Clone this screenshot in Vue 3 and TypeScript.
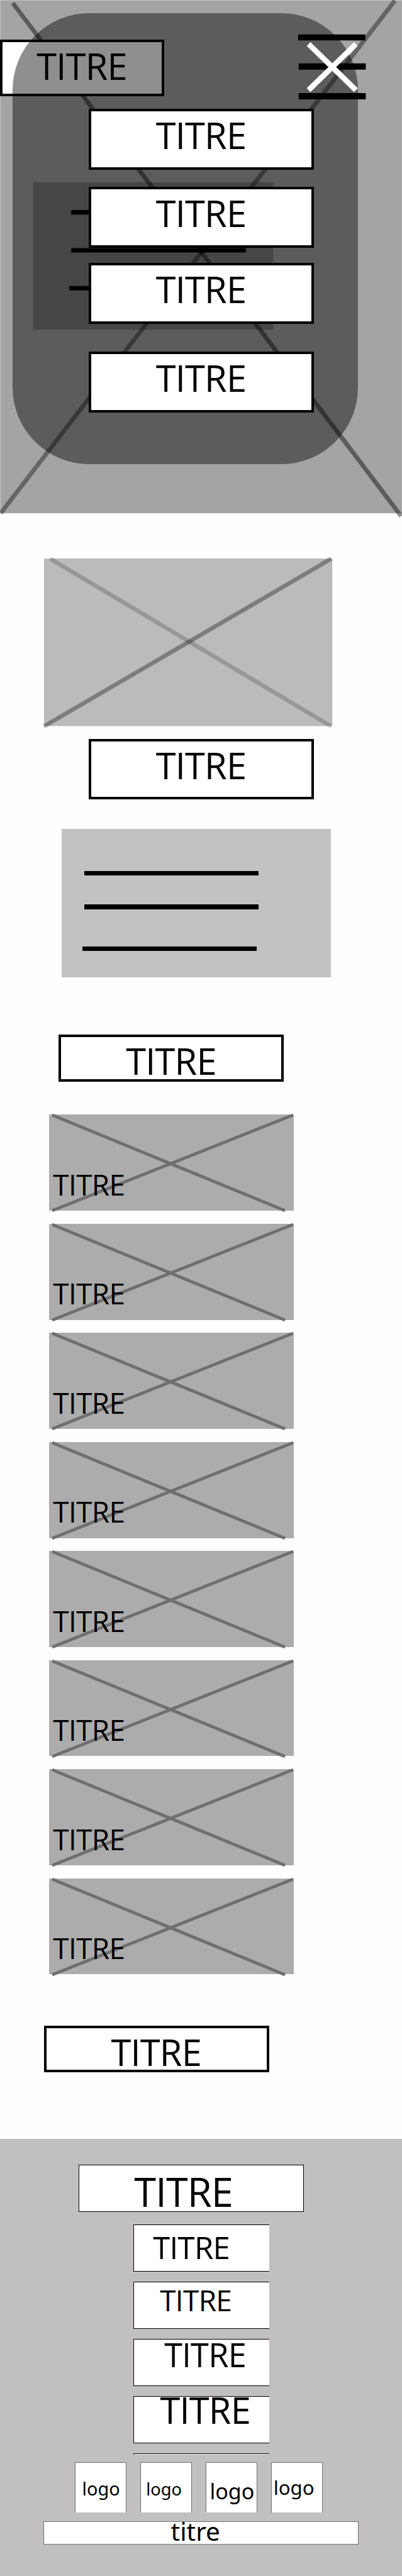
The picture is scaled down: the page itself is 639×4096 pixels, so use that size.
<script setup lang="ts">
const menu: string[] = ['first', 'second', 'third', 'fourth']
const gallery: number[] = [1, 2, 3, 4, 5, 6, 7, 8]
const links: string[] = ['link-a', 'link-b', 'link-c', 'link-d']
const logos: string[] = ['logo-a', 'logo-b', 'logo-c', 'logo-d']
</script>

<template>
  <div class="page">
    <header class="hero">
      <svg class="layer" viewBox="0 0 807 1040">
        <rect x="0" y="0" width="807" height="1030.5" fill="#d0d0d0" />
        <rect x="1" y="1" width="805.2" height="1029" fill="#a4a4a4" />
        <line x1="25.5" y1="6" x2="805" y2="1036" stroke="#000" stroke-opacity=".44" stroke-width="8.8" />
        <line x1="792.5" y1="1" x2="1.5" y2="1030" stroke="#000" stroke-opacity=".38" stroke-width="8.8" />
        <rect x="66.4" y="365.7" width="481.8" height="296.2" fill="#000" fill-opacity=".226" />
        <path d="M143 421.8h346v9H143zM143 498h350.6v9H143zM139 574h346v9H139z" fill="#000" />
        <path d="M598.3 69H733v12H598.3zM599.3 127.3H734v12.4H599.3zM599.3 187H734v12.4H599.3z" fill="#000" />
      </svg>
      <div class="box brand"><span class="label">TITRE</span></div>
      <div class="drawer"></div>
      <svg class="layer" viewBox="0 0 807 1040">
        <path d="M619.2 88.4L714.3 181M714.3 88.4L619.2 181" stroke="#fff" stroke-width="10.9" fill="none" />
      </svg>
      <nav class="menu">
        <div v-for="m in menu" :key="m" class="box card" :class="m"><span class="label">TITRE</span></div>
      </nav>
    </header>

    <svg class="picture" viewBox="0 0 578.5 336.5">
      <rect width="578.5" height="336.5" fill="#bbb" />
      <line x1="12.4" y1=".5" x2="576.4" y2="337" stroke="#000" stroke-opacity=".19" stroke-width="8.5" />
      <line x1="0" y1="337" x2="576.4" y2=".5" stroke="#000" stroke-opacity=".33" stroke-width="8.5" />
    </svg>
    <div class="box card caption"><span class="label">TITRE</span></div>

    <div class="text-panel">
      <i class="rule"></i>
      <i class="rule"></i>
      <i class="rule shifted"></i>
    </div>

    <div class="box heading works"><span class="label">TITRE</span></div>

    <section class="gallery">
      <article v-for="g in gallery" :key="g" class="tile">
        <svg class="cross" viewBox="0 0 490.5 193">
          <path d="M6.2 1.2L473.5 193.2M6.2 193.2L489.5 1.2" stroke="#6f6f6f" stroke-width="6.2" fill="none" />
        </svg>
        <span class="label tile-label">TITRE</span>
      </article>
    </section>

    <div class="box heading contact"><span class="label">TITRE</span></div>

    <footer class="footer">
      <div class="foot-title"><span class="label">TITRE</span></div>
      <div v-for="l in links" :key="l" class="link" :class="l"><span class="label">TITRE</span></div>
      <div class="link sliver"></div>
      <div class="logos">
        <div v-for="l in logos" :key="l" class="logo" :class="l"><span class="word">logo</span></div>
      </div>
      <div class="legal"><span class="word">titre</span></div>
    </footer>
  </div>
</template>

<style>
body {
  margin: 0;
  background: #fefefe;
  overflow: hidden;
}
</style>

<style scoped>
.page {
  zoom: 0.7921;
  width: 807px;
  height: 5172px;
  overflow: hidden;
  background: #fefefe;
  color: #000;
}
.page div,
.page header,
.page footer,
.page article {
  box-sizing: border-box;
}
.label,
.word {
  display: block;
  line-height: 1;
  white-space: nowrap;
}
.label {
  font-family: 'Open Sans', sans-serif;
  font-size: 73px;
  letter-spacing: -0.014em;
}
.word {
  font-family: 'Noto Sans', sans-serif;
}
.box {
  width: 452px;
  border: 5.1px solid #000;
  background: #fff;
  padding: 11.4px 0 0 129.7px;
}
.hero {
  position: relative;
  height: 1121px;
}
.layer {
  position: absolute;
  left: 0;
  top: 0;
  width: 807px;
  height: 1040px;
}
.brand {
  position: absolute;
  left: 0;
  top: 80px;
  width: 330px;
  height: 113px;
  padding: 11.4px 0 0 68.6px;
}
.drawer {
  position: absolute;
  left: 25.8px;
  top: 26.2px;
  width: 692.7px;
  height: 905px;
  border-radius: 154px;
  background: rgba(0, 0, 0, 0.44);
}
.menu {
  position: relative;
  padding: 219px 0 0 178px;
}
.card {
  height: 122px;
}
.second {
  margin-top: 34px;
}
.third {
  margin-top: 31px;
}
.fourth {
  margin-top: 56px;
}
.picture {
  display: block;
  width: 578.5px;
  height: 336.5px;
  margin-left: 88px;
  overflow: visible;
}
.caption {
  margin: 25.5px 0 0 178px;
}
.text-panel {
  width: 540px;
  height: 298px;
  margin: 59px 0 0 124px;
  padding: 84.2px 0 0 44.8px;
  background: #c2c2c2;
}
.rule {
  display: block;
  width: 350px;
  height: 9.3px;
  margin-bottom: 58.5px;
  background: #000;
}
.shifted {
  margin: 74.9px 0 0 -3.6px;
}
.rule:nth-child(2) {
  margin-bottom: 0;
}
.heading {
  height: 94px;
}
.works {
  margin: 115px 0 0 118px;
}
.gallery {
  display: flex;
  flex-direction: column;
  gap: 26px;
  margin: 66.5px 0 0 98.8px;
}
.tile {
  position: relative;
  width: 490.5px;
  height: 193px;
  background: #acacac;
}
.cross {
  position: absolute;
  left: 0;
  top: 0;
  width: 490.5px;
  height: 193px;
  overflow: visible;
}
.tile-label {
  position: relative;
  padding: 111.8px 0 0 7.7px;
  font-size: 58px;
}
.contact {
  margin: 102.5px 0 0 88px;
}
.footer {
  height: 880px;
  margin-top: 134px;
  padding-top: 52px;
  background: #c1bfc0;
}
.foot-title {
  width: 452px;
  height: 94px;
  margin-left: 158px;
  border: 1.3px solid #000;
  background: #fff;
  padding: 11.6px 0 0 110px;
}
.foot-title .label {
  font-size: 79.7px;
}
.link {
  width: 272px;
  height: 95px;
  margin: 20px 0 0 268px;
  border: 1.3px solid #000;
  border-right: 0;
  background: #fff;
}
.link-a {
  margin-top: 25px;
  padding: 14.2px 0 0 37.7px;
}
.link-a .label {
  font-size: 62px;
}
.link-b {
  padding: 7.7px 0 0 51.6px;
}
.link-b .label {
  font-size: 58px;
}
.link-c {
  padding: 0 0 0 60.5px;
}
.link-c .label {
  font-size: 66px;
  margin-top: -2.4px;
}
.link-d {
  padding: 0 0 0 52px;
}
.link-d .label {
  margin-top: -9.6px;
}
.sliver {
  height: 2.4px;
  border-bottom: 0;
}
.logos {
  display: flex;
  gap: 27.6px;
  margin: 15.6px 0 0 150.8px;
}
.logo {
  width: 103.4px;
  height: 101px;
  border: 1.3px solid #707070;
  border-bottom: 0;
  background: #fff;
}
.logo-a {
  padding: 33.5px 0 0 12.8px;
  font-size: 36.4px;
}
.logo-b {
  padding: 35.6px 0 0 10.2px;
  font-size: 34.4px;
}
.logo-c {
  padding: 34.8px 0 0 7px;
  font-size: 43px;
}
.logo-d {
  padding: 30px 0 0 3.8px;
  font-size: 39.4px;
}
.legal {
  width: 633px;
  height: 47px;
  margin: 17px 0 0 87px;
  border: 1.3px solid #707070;
  background: #fff;
  padding-left: 254.6px;
}
.legal .word {
  font-size: 51px;
  margin-top: -5.2px;
}
</style>
